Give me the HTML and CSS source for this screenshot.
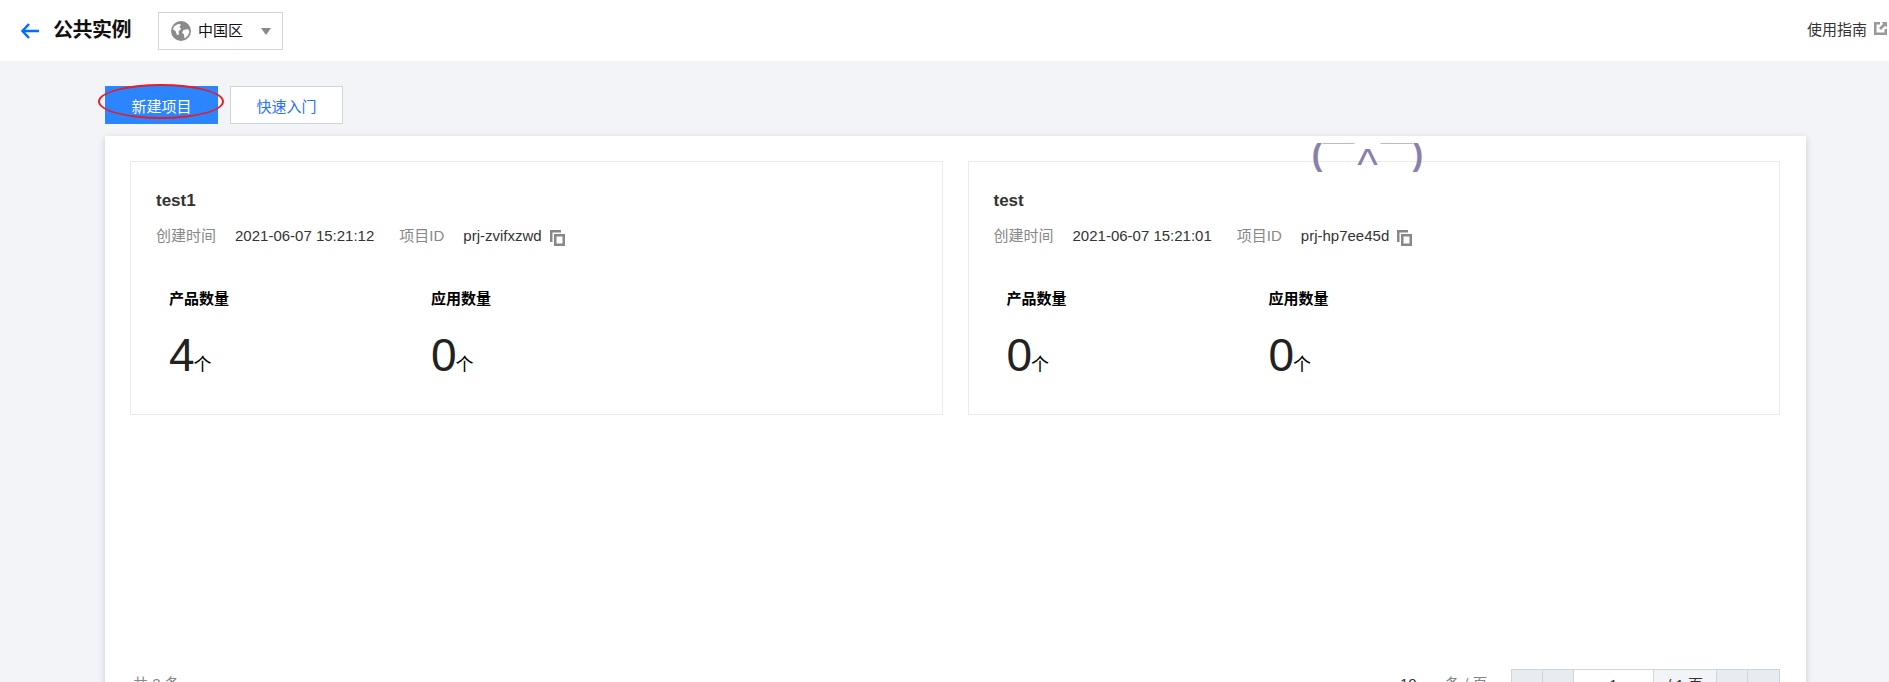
FILE: index.html
```html
<!DOCTYPE html>
<html lang="zh-CN">
<head>
<meta charset="utf-8">
<title>公共实例</title>
<link rel="stylesheet" href="styles.css">
</head>
<body>
<header class="topbar">
  <div class="topbar-left">
    <svg class="back" viewBox="0 0 18 16" width="18" height="16"><path d="M8 1 1.500 8 8 15M1.500 8H18" fill="none" stroke="#006eff" stroke-width="2.500"/></svg>
    <h1 class="page-title">公共实例</h1>
    <div class="region">
      <svg class="globe" viewBox="0 0 20 20" width="20" height="20"><circle cx="10" cy="10" r="10" fill="#8a8a8a"/><path d="M3 5.500 7 3l3 .5L8.500 6 10 8 7.500 10.500 8 13.500 6 14 4.500 10 2 8.500ZM12.500 9l4.500-1 1.500 3-2 4-3 2.500-.5-4-2-2Z" fill="#fff"/></svg>
      <span class="region-name">中国区</span>
      <span class="caret"></span>
    </div>
  </div>
  <a class="guide">使用指南
    <svg class="ext" viewBox="0 0 13 13" width="13" height="13"><path d="M0 0h6v2.500H2.500v8h8V7H13v6H0Z" fill="#999"/><path d="M7.500 0H13v5.500l-1.800-1.800L7 8 5 6l4.300-4.200Z" fill="#999"/></svg>
  </a>
</header>

<main class="content">
  <div class="actions">
    <button class="btn btn-primary">新建项目</button>
    <button class="btn btn-weak">快速入门</button>
  </div>
  <section class="panel">
    <div class="cards">
      <article class="card">
        <h2 class="card-title">test1</h2>
        <div class="meta">
          <span class="meta-label">创建时间</span><span class="meta-value">2021-06-07 15:21:12</span>
          <span class="meta-label id-label">项目ID</span><span class="meta-value">prj-zvifxzwd</span>
          <svg class="copy" viewBox="0 0 15 16" width="15" height="16"><path d="M0 0h11v2.500H2.500V12H0Z" fill="#888"/><path d="M4 4h11v12H4Zm2.500 2.500v7h6v-7Z" fill="#888"/></svg>
        </div>
        <div class="stats">
          <div class="stat"><div class="stat-label">产品数量</div><div class="stat-value">4<span class="unit">个</span></div></div>
          <div class="stat"><div class="stat-label">应用数量</div><div class="stat-value">0<span class="unit">个</span></div></div>
        </div>
      </article>
      <article class="card">
        <h2 class="card-title">test</h2>
        <div class="meta">
          <span class="meta-label">创建时间</span><span class="meta-value">2021-06-07 15:21:01</span>
          <span class="meta-label id-label">项目ID</span><span class="meta-value">prj-hp7ee45d</span>
          <svg class="copy" viewBox="0 0 15 16" width="15" height="16"><path d="M0 0h11v2.500H2.500V12H0Z" fill="#888"/><path d="M4 4h11v12H4Zm2.500 2.500v7h6v-7Z" fill="#888"/></svg>
        </div>
        <div class="stats">
          <div class="stat"><div class="stat-label">产品数量</div><div class="stat-value">0<span class="unit">个</span></div></div>
          <div class="stat"><div class="stat-label">应用数量</div><div class="stat-value">0<span class="unit">个</span></div></div>
        </div>
      </article>
    </div>
    <footer class="pager-row">
      <span class="total">共 2 条</span>
      <div class="pager-right">
        <span class="page-size">10</span>
        <span class="page-unit">条 / 页</span>
        <div class="pager">
          <span class="cell cell-off">«</span>
          <span class="cell cell-off">‹</span>
          <span class="cell cell-input">1</span>
          <span class="cell cell-count">/ 1 页</span>
          <span class="cell cell-off">›</span>
          <span class="cell cell-off">»</span>
        </div>
      </div>
    </footer>
  </section>
</main>

<div class="new-ring"></div>
<div class="kaomoji"><span class="km-part">(</span><span class="km-part km-bar">￣</span><span class="km-part km-mouth">^</span><span class="km-part km-bar">￣</span><span class="km-part">)</span></div>
</body>
</html>
```

FILE: styles.css
```css
* { box-sizing: border-box; }
html, body { margin: 0; height: 682px; overflow: hidden; }
body {
  background: #f2f4f8;
  color: #000;
  font-family: "Liberation Sans", "Noto Sans CJK SC", sans-serif;
  font-size: 15px;
  position: relative;
}
.topbar {
  height: 61px;
  background: #fff;
  display: flex;
  align-items: center;
  justify-content: space-between;
  padding: 0 2px 0 21px;
}
.topbar-left { display: flex; align-items: center; }
.back { display: block; margin-right: 14px; margin-top: 0; }
.page-title { margin: -2px 27px 0 0; font-size: 20px; font-weight: 700; line-height: 28px; width: 78px; white-space: nowrap; letter-spacing: -.5px; color: #111; }
.region {
  width: 125px;
  height: 38px;
  border: 1px solid #cfd5de;
  display: flex;
  align-items: center;
  padding-left: 12px;
  background: #fff;
}
.globe { display: block; }
.region-name { margin-left: 7px; margin-top: -2px; width: 63px; font-weight: 400; color: #111; }
.caret { width: 0; height: 0; margin-top: 1px; border: 5px solid transparent; border-top: 7px solid #888; border-bottom: 0; }
.guide { display: flex; align-items: center; gap: 7px; color: #333; margin-top: -5px; }
.ext { display: block; }

.content { padding: 25px 83px 0 105px; }
.actions { display: flex; gap: 12px; }
.btn {
  width: 113px;
  height: 38px;
  font: inherit;
  border: 1px solid #cfd5de;
  background: #fff;
  padding: 0;
}
.btn-primary { background: #2b85ff; border-color: #2b85ff; color: #fff; }
.btn-weak { color: #2b6fff; }

.panel {
  margin-top: 12px;
  width: 1701px;
  height: 600px;
  background: #fff;
  padding: 25px 26px 0 25px;
  box-shadow: 0 2px 6px rgba(54, 58, 80, .22);
}
.cards { display: flex; gap: 25px; }
.card {
  width: 813px;
  height: 254px;
  border: 1px solid #e9ebef;
  padding: 26px 25px 0;
}
.card-title { margin: 0; font-size: 17px; line-height: 26px; font-weight: 700; color: #333; }
.meta { display: flex; align-items: center; margin-top: 12px; line-height: 20px; }
.meta-label { color: #888; margin-right: 19px; }
.meta-value { color: #333; }
.id-label { margin-left: 25px; }
.copy { display: block; margin-left: 8px; margin-top: 3px; }
.stats { display: flex; padding-left: 13px; margin-top: 43px; }
.stat { width: 262px; }
.stat-label { font-weight: 700; line-height: 20px; color: #000; }
.stat-value { font-size: 46px; line-height: 52px; margin-top: 20px; color: #222; }
.unit { font-size: 18px; color: #000; margin-left: -1px; }

.pager-row {
  display: flex;
  justify-content: space-between;
  margin-top: 254px;
  height: 40px;
  line-height: 20px;
  color: #888;
}
.total { padding-left: 3px; margin-top: 5px; }
.pager-right { display: flex; }
.page-size { color: #333; margin-top: 5px; width: 45px; }
.page-unit { margin-top: 5px; width: 66px; }
.pager { display: flex; height: 38px; border: 1px solid #cfd5de; background: #e8ebf0; }
.cell { width: 31px; text-align: center; border-right: 1px solid #cfd5de; color: #bbb; padding-top: 5px; }
.cell:last-child { border-right: 0; }
.cell-input { width: 80px; background: #fff; color: #333; }
.cell-count { width: 63px; background: #f2f4f8; color: #333; }

.new-ring {
  position: absolute;
  left: 98px;
  top: 84px;
  width: 126px;
  height: 35px;
  border: 2px solid #e2202c;
  border-radius: 50%;
}
.kaomoji {
  position: absolute;
  left: 1300px;
  top: 143px;
  width: 135px;
  height: 29px;
  overflow: hidden;
  color: #8b7fad;
  display: flex;
  justify-content: center;
  font-size: 32px;
  font-weight: 700;
  line-height: 40px;
}
.km-part { display: block; margin-top: -9px; white-space: nowrap; }
.km-bar { margin-top: -4px; }
.km-mouth { margin-top: 2px; width: 26px; font-size: 44px; font-weight: 400; text-align: center; }
```
